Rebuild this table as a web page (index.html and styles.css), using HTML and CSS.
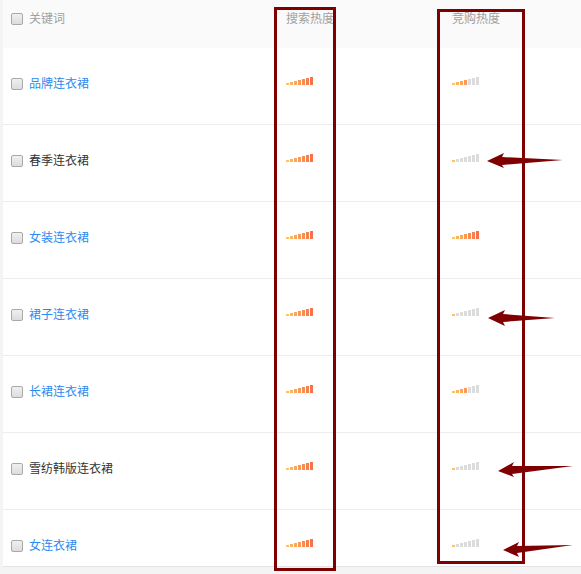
FILE: index.html
```html
<!DOCTYPE html>
<html lang="zh">
<head>
<meta charset="utf-8">
<link rel="stylesheet" href="styles.css">
</head>
<body>
<div class="page">
  <div class="table">
    <div class="row head">
      <div class="cell name"><span class="cb"></span><span class="th">关键词</span></div>
      <div class="cell"><span class="th">搜索热度</span></div>
      <div class="cell"><span class="th">竞购热度</span></div>
    </div>
    <div class="row">
      <div class="cell name"><span class="cb"></span><span class="kw link">品牌连衣裙</span></div>
      <div class="cell"><span class="bars"><i class="b1"></i><i class="b2"></i><i class="b3"></i><i class="b4"></i><i class="b5"></i><i class="b6"></i><i class="b7"></i></span></div>
      <div class="cell"><span class="bars"><i class="b1"></i><i class="b2"></i><i class="b3"></i><i class="b4"></i><i class="b5 off"></i><i class="b6 off"></i><i class="b7 off"></i></span></div>
    </div>
    <div class="row">
      <div class="cell name"><span class="cb"></span><span class="kw">春季连衣裙</span></div>
      <div class="cell"><span class="bars"><i class="b1"></i><i class="b2"></i><i class="b3"></i><i class="b4"></i><i class="b5"></i><i class="b6"></i><i class="b7"></i></span></div>
      <div class="cell"><span class="bars"><i class="b1"></i><i class="b2 off"></i><i class="b3 off"></i><i class="b4 off"></i><i class="b5 off"></i><i class="b6 off"></i><i class="b7 off"></i></span></div>
    </div>
    <div class="row">
      <div class="cell name"><span class="cb"></span><span class="kw link">女装连衣裙</span></div>
      <div class="cell"><span class="bars"><i class="b1"></i><i class="b2"></i><i class="b3"></i><i class="b4"></i><i class="b5"></i><i class="b6"></i><i class="b7"></i></span></div>
      <div class="cell"><span class="bars"><i class="b1"></i><i class="b2"></i><i class="b3"></i><i class="b4"></i><i class="b5"></i><i class="b6"></i><i class="b7"></i></span></div>
    </div>
    <div class="row">
      <div class="cell name"><span class="cb"></span><span class="kw link">裙子连衣裙</span></div>
      <div class="cell"><span class="bars"><i class="b1"></i><i class="b2"></i><i class="b3"></i><i class="b4"></i><i class="b5"></i><i class="b6"></i><i class="b7"></i></span></div>
      <div class="cell"><span class="bars"><i class="b1"></i><i class="b2 off"></i><i class="b3 off"></i><i class="b4 off"></i><i class="b5 off"></i><i class="b6 off"></i><i class="b7 off"></i></span></div>
    </div>
    <div class="row">
      <div class="cell name"><span class="cb"></span><span class="kw link">长裙连衣裙</span></div>
      <div class="cell"><span class="bars"><i class="b1"></i><i class="b2"></i><i class="b3"></i><i class="b4"></i><i class="b5"></i><i class="b6"></i><i class="b7"></i></span></div>
      <div class="cell"><span class="bars"><i class="b1"></i><i class="b2"></i><i class="b3"></i><i class="b4"></i><i class="b5 off"></i><i class="b6 off"></i><i class="b7 off"></i></span></div>
    </div>
    <div class="row">
      <div class="cell name"><span class="cb"></span><span class="kw">雪纺韩版连衣裙</span></div>
      <div class="cell"><span class="bars"><i class="b1"></i><i class="b2"></i><i class="b3"></i><i class="b4"></i><i class="b5"></i><i class="b6"></i><i class="b7"></i></span></div>
      <div class="cell"><span class="bars"><i class="b1"></i><i class="b2 off"></i><i class="b3 off"></i><i class="b4 off"></i><i class="b5 off"></i><i class="b6 off"></i><i class="b7 off"></i></span></div>
    </div>
    <div class="row">
      <div class="cell name"><span class="cb"></span><span class="kw link">女连衣裙</span></div>
      <div class="cell"><span class="bars"><i class="b1"></i><i class="b2"></i><i class="b3"></i><i class="b4"></i><i class="b5"></i><i class="b6"></i><i class="b7"></i></span></div>
      <div class="cell"><span class="bars"><i class="b1"></i><i class="b2 off"></i><i class="b3 off"></i><i class="b4 off"></i><i class="b5 off"></i><i class="b6 off"></i><i class="b7 off"></i></span></div>
    </div>
  </div>
  <svg class="marks" width="581" height="574" viewBox="0 0 581 574">
    <g fill="#7f0000">
      <polygon points="487,161 504,153 502,157 563,160 502,165 504,168"/>
      <polygon points="488,318 505,310 503,314 555,318 503,322 505,326"/>
      <polygon points="498,471 514,462 512,466 573,466 512,474 514,477"/>
      <polygon points="503,550 519,542 517,546 573,545 517,553 519,557"/>
    </g>
  </svg>
  <div class="box box1"></div>
  <div class="box box2"></div>
</div>
</body>
</html>
```

FILE: styles.css
```css
html, body {
  margin: 0;
  padding: 0;
  background: #f4f4f4;
}
body {
  font-family: "Noto Sans CJK SC", "Noto Sans", sans-serif;
  font-size: 12px;
  color: #333;
}
.page {
  position: relative;
  width: 581px;
  height: 574px;
  overflow: hidden;
}
.table {
  margin-left: 3px;
  height: 566px;
  overflow: hidden;
  background: #fff;
  border-bottom: 1px solid #e3e3e3;
}
.row {
  display: grid;
  grid-template-columns: 275px 166px 1fr;
  height: 76px;
  border-bottom: 1px solid #ececec;
}
.row.head {
  height: 48px;
  border-bottom: none;
  background: #fafafa;
}
.cell {
  display: flex;
  align-items: flex-start;
  padding: 27px 0 0 8px;
  line-height: 16px;
  height: 16px;
}
.head .cell {
  padding-top: 10px;
}
.th {
  color: #a0a0a0;
}
.cb {
  box-sizing: border-box;
  width: 12px;
  height: 12px;
  margin-top: 3px;
  margin-right: 6px;
  border: 1px solid #a9a9a9;
  border-radius: 2px;
  background: linear-gradient(#f0f0f0, #dcdcdc);
}
.kw {
  color: #333;
}
.kw.link {
  color: #2b8af0;
}
.bars {
  display: flex;
  align-items: flex-end;
  gap: 1px;
  height: 10px;
}
.bars i {
  display: block;
  width: 3px;
}
.b1 { height: 2px; background: #fdc35d; }
.b2 { height: 3px; background: #fcb459; }
.b3 { height: 4px; background: #fba757; }
.b4 { height: 5px; background: #fa9a54; }
.b5 { height: 6px; background: #f98c51; }
.b6 { height: 7px; background: #f87f4e; }
.b7 { height: 8px; background: #f6724b; }
.bars i.off { background: #dcdcdc; }
.marks {
  position: absolute;
  left: 0;
  top: 0;
}
.box {
  position: absolute;
  border: 3px solid #7f0000;
  box-sizing: border-box;
}
.box1 {
  left: 274px;
  top: 7px;
  width: 62px;
  height: 564px;
}
.box2 {
  left: 437px;
  top: 9px;
  width: 88px;
  height: 555px;
}
```
